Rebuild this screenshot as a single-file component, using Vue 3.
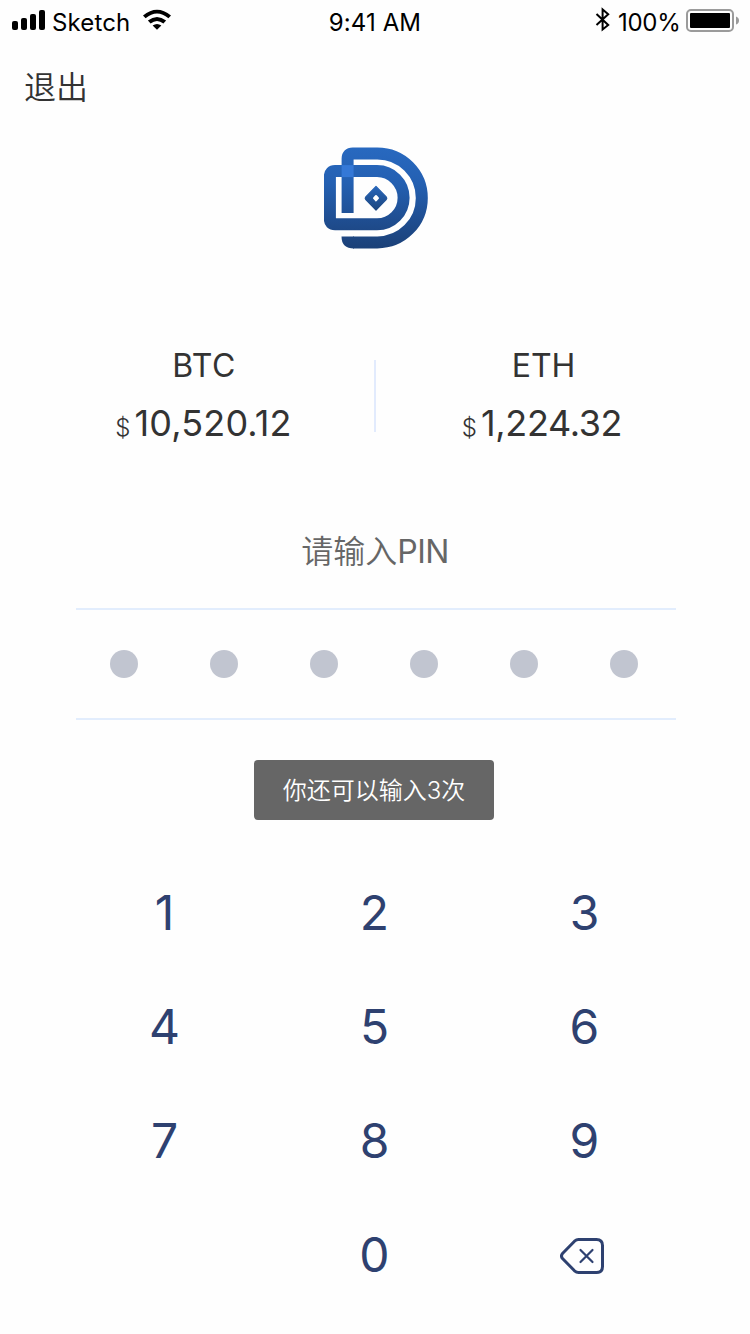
<script setup>
const prices = [
  { name: 'BTC', value: '10,520.12', cls: 'btc' },
  { name: 'ETH', value: '1,224.32', cls: 'eth' }
]
const keys = ['1', '2', '3', '4', '5', '6', '7', '8', '9', '', '0']
</script>

<template>
  <main class="screen">
    <header class="status">
      <div class="carrier">
        <svg class="signal" width="34" height="21" viewBox="0 0 34 21">
          <rect x="0" y="11" width="6" height="9" rx="2" />
          <rect x="9" y="8" width="6" height="12" rx="2" />
          <rect x="18" y="4" width="6" height="16" rx="2" />
          <rect x="27" y="0" width="6" height="20" rx="2" />
        </svg>
        <span class="carrier-name">Sketch</span>
        <svg class="wifi" width="30" height="22" viewBox="0 0 30 22">
          <path d="M1 6.6Q15-5.2 29 6.6L26.4 9.3Q15-.3 3.6 9.3Z" />
          <path d="M5.9 11.6Q15 4.2 24.1 11.6L21.4 14.4Q15 9.4 8.6 14.4Z" />
          <path d="M10.6 16.6Q15 13.2 19.4 16.6L15 20.8Z" />
        </svg>
      </div>
      <span class="time">9:41 AM</span>
      <div class="power">
        <svg class="bluetooth" width="16" height="26" viewBox="0 0 16 26">
          <path d="M1.5 7L13.2 18L7.6 22.5V2.5L13.2 7.2L1.5 18" fill="none" stroke="#000" stroke-width="2" />
        </svg>
        <span class="percent">100%</span>
        <svg class="battery" width="54" height="24" viewBox="0 0 54 24">
          <rect x="1" y="1" width="46" height="21" rx="4" fill="none" stroke="#9b9b9b" stroke-width="2" />
          <rect x="4" y="4" width="40" height="15" rx="1" />
          <path d="M50 7.5Q53 8.5 53 11.5T50 15.5Z" fill="#9b9b9b" />
        </svg>
      </div>
    </header>

    <nav class="nav">退出</nav>

    <svg class="logo" width="106" height="104" viewBox="0 0 106 104">
      <defs>
        <linearGradient id="brand" gradientUnits="userSpaceOnUse" x1="50" y1="0" x2="50" y2="102">
          <stop offset="0" stop-color="#2869c0" />
          <stop offset=".35" stop-color="#2460b2" />
          <stop offset="1" stop-color="#1b4077" />
        </linearGradient>
        <linearGradient id="core" gradientUnits="userSpaceOnUse" x1="50" y1="38" x2="50" y2="65">
          <stop offset="0" stop-color="#2868be" />
          <stop offset="1" stop-color="#1b4379" />
        </linearGradient>
      </defs>
      <g fill="none" stroke="url(#brand)" stroke-width="12">
        <path d="M23.6 66V11.5Q23.6 6.4 28.7 6.4H53.3A44.5 44.5 0 0 1 53.3 95.4H29" />
        <path d="M53 24.1H11Q5.9 24.1 5.9 29.2V72.2Q5.9 77.3 11 77.3H53A26.6 26.6 0 0 0 53 24.1Z" />
      </g>
      <path d="M17.5 89.4H30V101.4Q17.5 101.4 17.5 89.4Z" fill="url(#brand)" />
      <rect x="17.6" y="18.1" width="12" height="12" fill="#3478d7" />
      <path d="M52 39.5L62.2 49.8Q63.4 51.1 62.2 52.5L52 63L41.8 52.5Q40.6 51.1 41.8 49.8Z" fill="url(#core)" stroke="url(#core)" stroke-width="1.2" stroke-linejoin="round" />
      <path d="M52 49L54 51.2L52 53.4L50 51.2Z" fill="#fff" stroke="#fff" stroke-width="2" stroke-linejoin="round" />
    </svg>

    <section class="prices">
      <div v-for="p in prices" :key="p.name" class="price" :class="p.cls">
        <div class="coin">{{ p.name }}</div>
        <div class="amount"><span class="dollar">$</span><span class="value">{{ p.value }}</span></div>
      </div>
    </section>

    <h1 class="prompt">请输入<span class="pin">PIN</span></h1>
    <div class="dots"><i v-for="n in 6" :key="n" class="dot"></i></div>
    <div class="notice">你还可以输入3次</div>

    <section class="keypad">
      <div v-for="(k, i) in keys" :key="i" class="key">{{ k }}</div>
      <div class="key">
        <svg class="erase" width="46" height="38" viewBox="0 0 46 38">
          <g fill="none" stroke="#2e4170" stroke-linecap="round" stroke-linejoin="round">
            <path d="M18.5 2.5H36.5Q42.5 2.5 42.5 8.5V29.5Q42.5 35.5 36.5 35.5H18.5Q16.5 35.5 14.5 33.8L2.5 21.5Q.5 19 2.5 16.5L14.5 4.2Q16.5 2.5 18.5 2.5Z" stroke-width="3" />
            <path d="M20.5 13L32.5 25M32.5 13L20.5 25" stroke-width="2.2" />
          </g>
        </svg>
      </div>
    </section>
  </main>
</template>

<style>
body { background: #fefefe; }
</style>

<style scoped>
.screen {
  box-sizing: border-box;
  width: 750px;
  height: 1334px;
  overflow: hidden;
  display: flex;
  flex-direction: column;
  align-items: center;
  background: #fefefe;
  color: #333;
  font-family: Inter, "Noto Sans CJK SC", sans-serif;
}
.status {
  width: 750px;
  height: 44px;
  display: grid;
  grid-template-columns: 250px 250px 250px;
  color: #000;
  font-size: 24px;
  line-height: 46px;
}
.carrier, .power { display: flex; align-items: flex-start; }
.carrier { padding-left: 12px; }
.signal { margin-top: 10px; }
.carrier-name { margin-left: 6px; width: 90px; letter-spacing: .15px; }
.wifi { margin-top: 9px; }
.time { text-align: center; letter-spacing: .1px; }
.power { padding-left: 95px; }
.bluetooth { margin-top: 7px; }
.percent { width: 75px; margin-left: 7px; letter-spacing: -.3px; }
.battery { margin-top: 9px; margin-left: -7px; }
.nav {
  align-self: flex-start;
  height: 103px;
  padding-left: 24px;
  font-size: 32px;
  font-weight: 350;
  line-height: 88px;
}
.logo { margin-left: 4px; }
.prices {
  position: relative;
  width: 680px;
  height: 110px;
  margin-top: 89px;
  display: grid;
  grid-template-columns: 1fr 1fr;
}
.prices::after {
  content: "";
  position: absolute;
  left: 339px;
  top: 20px;
  width: 2px;
  height: 72px;
  background: #e2ebfd;
}
.price { text-align: center; font-weight: 370; }
.coin { height: 50px; font-size: 32px; line-height: 52px; }
.btc .coin { padding-right: 2px; letter-spacing: .5px; }
.eth .coin { padding-right: 3px; letter-spacing: 0; }
.amount { display: flex; justify-content: center; align-items: baseline; line-height: 66px; }
.dollar { font-size: 24px; font-weight: 350; margin-right: 4px; }
.value { font-size: 36px; }
.btc .amount { padding-right: 3px; }
.btc .value { letter-spacing: .15px; }
.eth .amount { padding-right: 6px; }
.eth .value { letter-spacing: -.35px; }
.prompt {
  height: 98px;
  margin: 60px 0 0;
  color: #666;
  font-size: 32px;
  font-weight: 350;
  line-height: 84px;
}
.pin { font-weight: 370; letter-spacing: -.5px; }
.dots {
  box-sizing: border-box;
  width: 600px;
  height: 112px;
  margin-left: 2px;
  padding: 0 38px 0 34px;
  border-top: 2px solid #e2edfd;
  border-bottom: 2px solid #e2edfd;
  display: flex;
  align-items: center;
  justify-content: space-between;
}
.dot { width: 28px; height: 28px; border-radius: 50%; background: #c1c5d0; }
.notice {
  width: 240px;
  height: 60px;
  margin: 40px 2px 0 0;
  border-radius: 4px;
  background: #666;
  color: #fff;
  text-align: center;
  font-size: 24px;
  font-weight: 350;
  line-height: 61px;
}
.keypad {
  margin-top: 35px;
  margin-right: 1px;
  width: 630px;
  display: grid;
  grid-template-columns: repeat(3, 210px);
  grid-auto-rows: 114px;
}
.key {
  display: flex;
  align-items: center;
  justify-content: center;
  color: #2e4170;
  font-size: 48px;
  font-weight: 370;
}
.erase { margin: 3px 3px 0 0; }
</style>
